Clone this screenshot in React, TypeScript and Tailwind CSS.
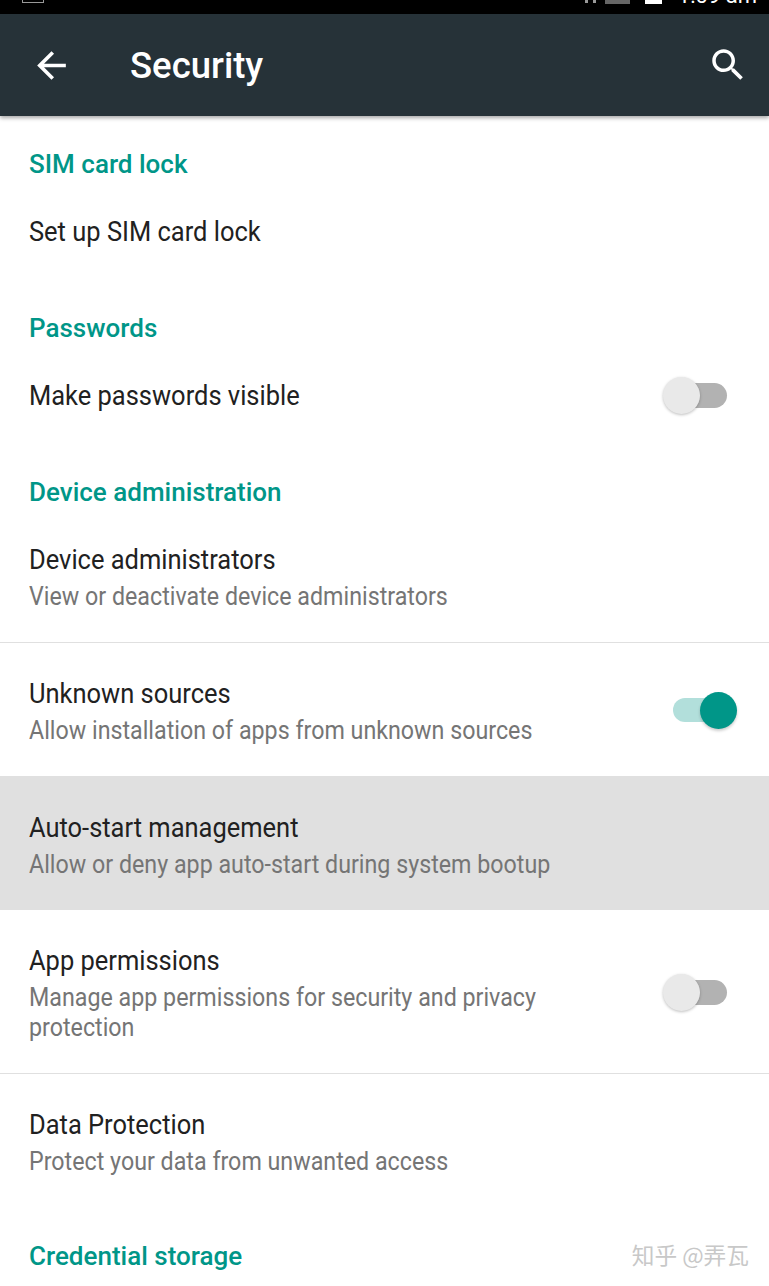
function SectionTitle({ title, className }: { title: string; className: string }) {
  return <div className={`px-[29px] text-[26px] leading-[32px] font-medium text-[#009688] ${className}`}>{title}</div>;
}

function Toggle({ on }: { on?: boolean }) {
  if (on) {
    return (
      <div className="relative h-[24px] w-[54px] rounded-full bg-[#b2dfdb]">
        <div className="absolute right-[-10px] top-[-6px] h-[37px] w-[37px] rounded-full bg-[#009688] shadow-[0_2px_3px_rgba(0,0,0,0.2)]" />
      </div>
    );
  }
  return (
    <div className="relative h-[25px] w-[54px] rounded-full bg-[#b2b2b2]">
      <div className="absolute left-[-10px] top-[-6px] h-[37px] w-[37px] rounded-full bg-[#e9e9e9] shadow-[0_1px_3px_rgba(0,0,0,0.25)]" />
    </div>
  );
}

interface RowProps {
  title: string;
  sub?: string[];
  toggle?: "on" | "off";
  className: string;
}

function Row({ title, sub, toggle, className }: RowProps) {
  return (
    <div className={`flex items-center justify-between pl-[29px] ${className}`}>
      <div>
        <div className="origin-left scale-x-[0.943] whitespace-nowrap text-[27px] leading-[36px] text-[#212121]">{title}</div>
        {sub?.map((line, i) => (
          <div key={i} className={`origin-left scale-x-[0.93] whitespace-nowrap text-[25px] leading-[30px] text-[#757575] ${i === 0 ? "mt-[4px]" : ""}`}>
            {line}
          </div>
        ))}
      </div>
      {toggle && (
        <div className="mb-[2px] mr-[42px]">
          <Toggle on={toggle === "on"} />
        </div>
      )}
    </div>
  );
}

export default function App() {
  return (
    <div className="relative h-[1286px] w-[769px] overflow-hidden bg-white font-['Roboto',sans-serif]">
      {/* status bar, cropped at the top in the screenshot */}
      <div className="flex h-[14px] items-start justify-between overflow-hidden bg-black pl-[22px] pr-[12px]">
        <div className="h-[3px] w-[22px] border border-t-0 border-[#999]" />
        <div className="flex items-start">
          <div className="mr-[5px] h-[3px] w-[3px] bg-[#999]" />
          <div className="mr-[9px] h-[3px] w-[3px] bg-[#999]" />
          <div className="mr-[15px] h-[4px] w-[25px] bg-[#666]" />
          <div className="mr-[16px] h-[4px] w-[17px] bg-white" />
          <div className="h-[4px] overflow-hidden text-[22px] leading-[4px] text-white">
            <span className="relative top-[-6px]">1:09 am</span>
          </div>
        </div>
      </div>
      <header className="flex h-[102px] items-center justify-between bg-[#263238] pl-[30px] pr-[20px] shadow-[0_2px_4px_rgba(0,0,0,0.35)]">
        <div className="flex items-center">
          <svg viewBox="0 0 24 24" width="43" height="43" fill="white">
            <path d="M20 11H7.83l5.59-5.59L12 4l-8 8 8 8 1.41-1.41L7.83 13H20v-2z" />
          </svg>
          <h1 className="ml-[57px] mt-[2px] text-[36.5px] font-medium text-white">Security</h1>
        </div>
        <svg viewBox="0 0 24 24" width="42" height="42" fill="white">
          <path d="M15.5 14h-.79l-.28-.27C15.41 12.59 16 11.11 16 9.5 16 5.91 13.09 3 9.5 3S3 5.91 3 9.5 5.91 16 9.5 16c1.61 0 3.09-.59 4.23-1.57l.27.28v.79l5 4.99L20.49 19l-4.99-5zm-6 0C7.01 14 5 11.99 5 9.5S7.01 5 9.5 5 14 7.01 14 9.5 11.99 14 9.5 14z" />
        </svg>
      </header>
      <SectionTitle title="SIM card lock" className="mt-[32px]" />
      <Row title="Set up SIM card lock" className="mt-[34px]" />
      <SectionTitle title="Passwords" className="mt-[62px]" />
      <Row title="Make passwords visible" toggle="off" className="mt-[34px]" />
      <SectionTitle title="Device administration" className="mt-[62px]" />
      <Row title="Device administrators" sub={["View or deactivate device administrators"]} className="mt-[34px]" />
      <div className="mt-[30px] h-px bg-[#e0e0e0]" />
      <Row title="Unknown sources" sub={["Allow installation of apps from unknown sources"]} toggle="on" className="mt-[33px]" />
      <div className="mt-[30px] h-[134px] bg-[#e0e0e0] pt-[33px]">
        <div className="pt-px">
          <Row title="Auto-start management" sub={["Allow or deny app auto-start during system bootup"]} className="" />
        </div>
      </div>
      <Row title="App permissions" sub={["Manage app permissions for security and privacy", "protection"]} toggle="off" className="mt-[33px]" />
      <div className="mt-[30px] h-px bg-[#e0e0e0]" />
      <Row title="Data Protection" sub={["Protect your data from unwanted access"]} className="mt-[33px]" />
      <SectionTitle title="Credential storage" className="mt-[63px]" />
      <div className="absolute bottom-[18px] right-[20px] font-['Noto_Sans_CJK_SC',sans-serif] text-[22.7px] leading-[26px] text-[#c8c8c8]">
        知乎 @弄瓦
      </div>
    </div>
  );
}
